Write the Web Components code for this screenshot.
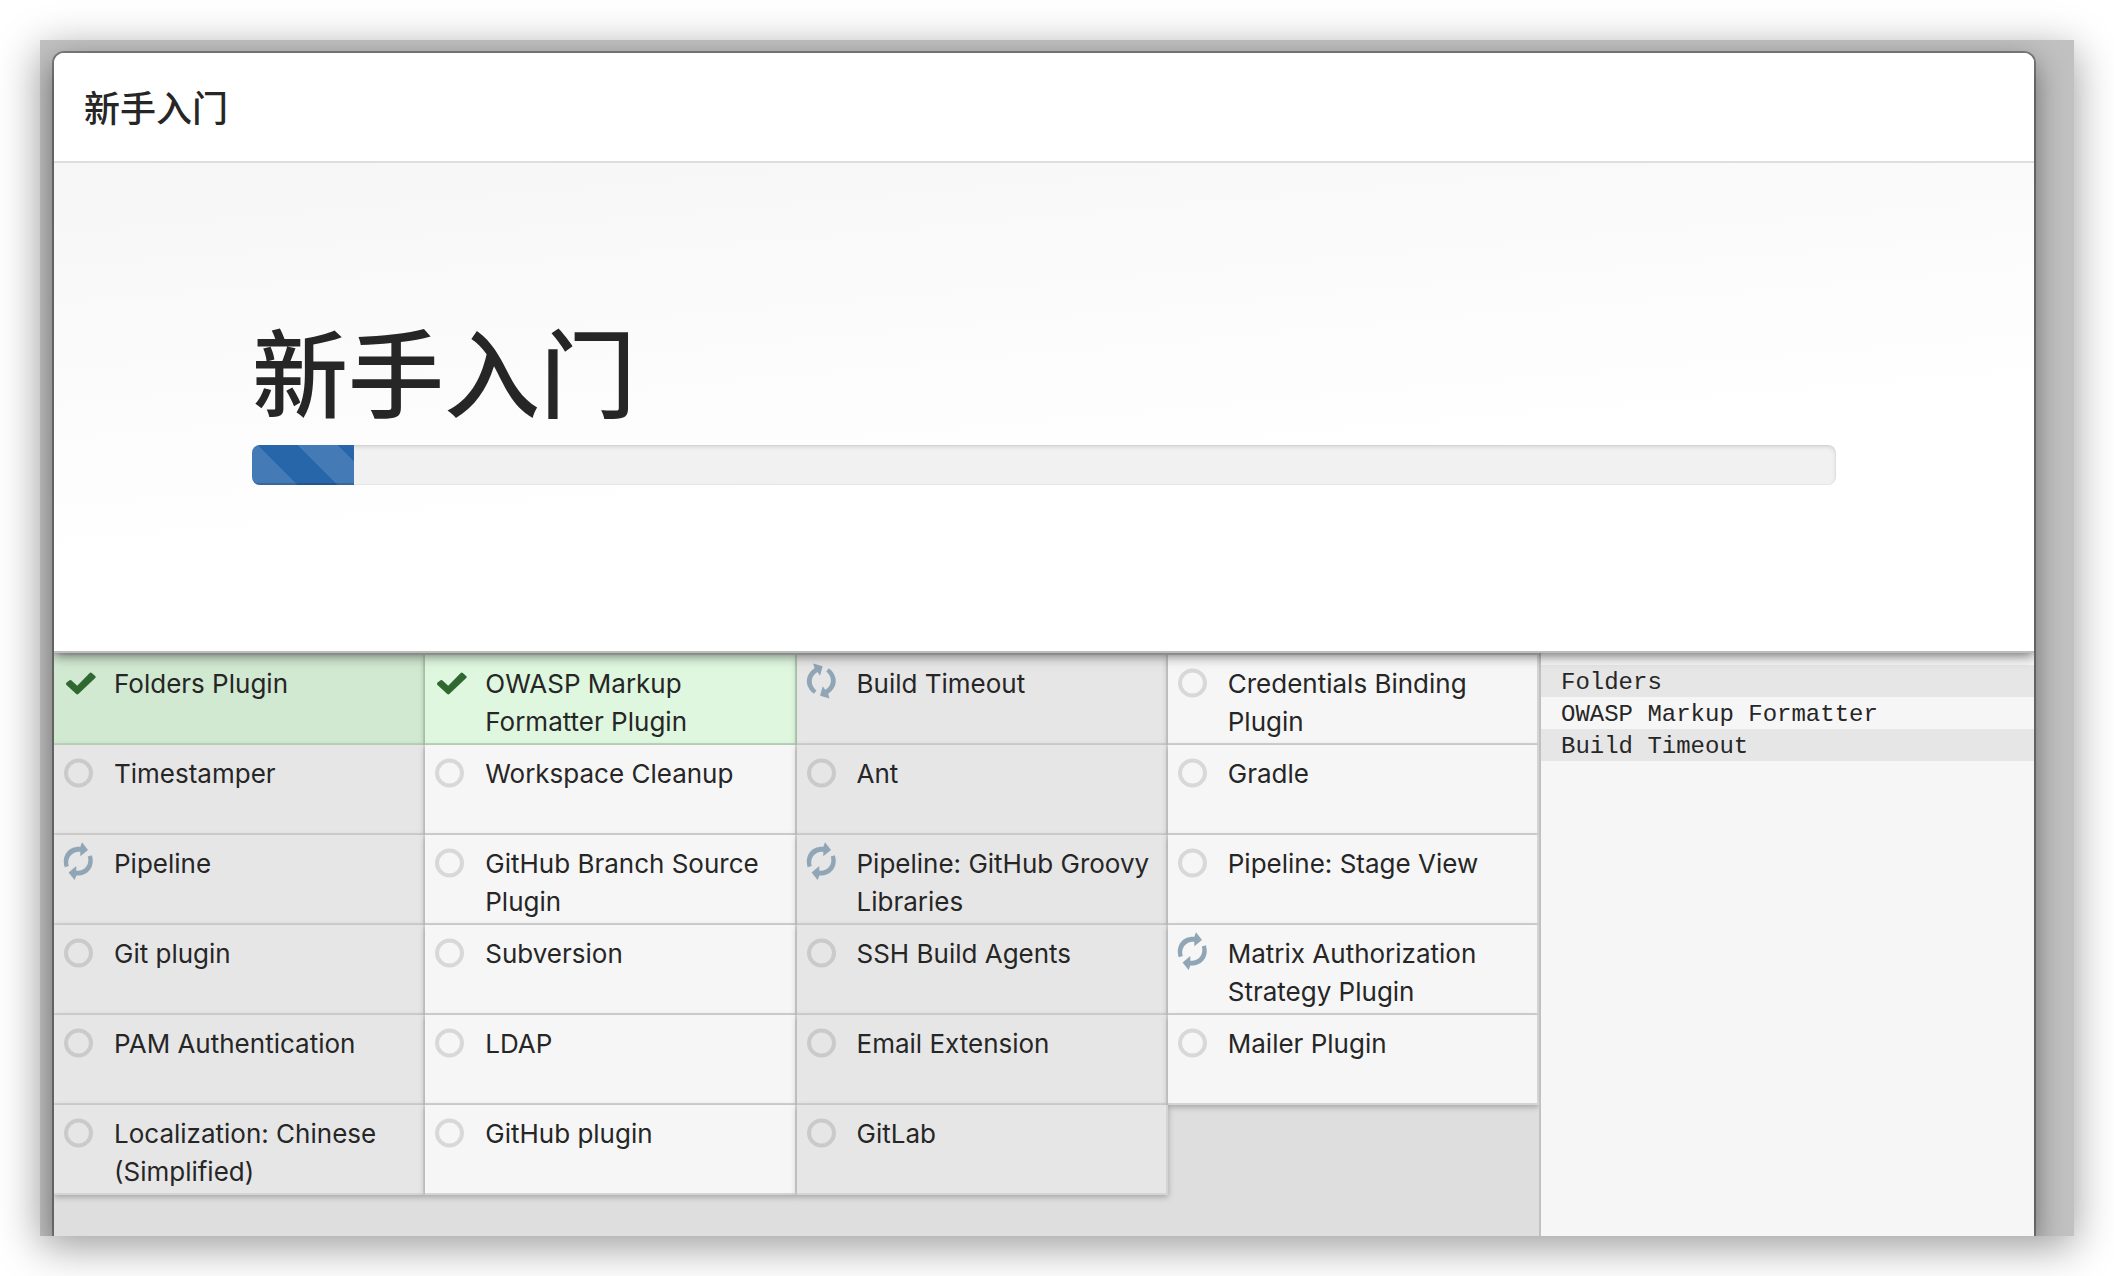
<!DOCTYPE html>
<html lang="zh-CN">
<head>
<meta charset="utf-8">
<title>新手入门</title>
<style>
html, body { height: 100%; margin: 0; }
body { background: #fff; color: #262626; font-family: Inter, "Noto Sans CJK SC", sans-serif; }
</style>
</head>
<body>
<setup-wizard heading="新手入门">
  <install-hero slot="hero" heading="新手入门" value="6.45"></install-hero>
  <plugin-grid slot="plugins"></plugin-grid>
  <install-log slot="log"></install-log>
</setup-wizard>
<script>
const attach = (host, html) => {
  const root = host.attachShadow({ mode: 'open' });
  root.innerHTML = html;
  return root;
};

customElements.define('setup-wizard', class extends HTMLElement {
  connectedCallback() {
    attach(this, `<style>
      :host { display: block; box-sizing: border-box; height: 100%; padding: 40px; overflow: hidden; }
      .backdrop { box-sizing: border-box; height: 100%; padding: 13px 40px 0 14px; background: #c1c1c1; overflow: hidden;
        display: flex; }
      .frame { height: 100%; box-shadow: 0 10px 40px rgba(0,0,0,.4); }
      .modal { flex: 1; display: flex; flex-direction: column; overflow: hidden; border-radius: 10px 10px 0 0; background: #fff; }
      .edge { flex: 1; display: flex; border-radius: 10px 10px 0 0;
        box-shadow: 0 0 0 2px rgba(0,0,0,.33), 0 10px 30px rgba(0,0,0,.5); }
      header { position: relative; z-index: 2; display: flex; align-items: center; box-sizing: border-box; height: 110px;
        padding: 3px 30px 0; background: #fff; border-bottom: 2px solid #dedede; }
      h1 { margin: 0; font-size: 36px; line-height: 50px; font-weight: 500; }
      .hero { position: relative; z-index: 1; flex: none; }
      .body { flex: 1; display: grid; grid-template-columns: 3fr 1fr; min-height: 0; background: #dedede; }
    </style>
    <div class="frame"><div class="backdrop"><div class="edge"><div class="modal">
      <header><h1>${this.getAttribute('heading')}</h1></header>
      <div class="hero"><slot name="hero"></slot></div>
      <div class="body"><slot name="plugins"></slot><slot name="log"></slot></div>
    </div></div></div></div>`);
  }
});

customElements.define('install-hero', class extends HTMLElement {
  connectedCallback() {
    attach(this, `<style>
      :host { display: block; box-sizing: border-box; height: 490px; padding: 148px 10% 0;
        background: linear-gradient(175deg, #f6f6f6, #fff 62%); border-bottom: 2px solid #bdbdbd;
        box-shadow: 0 2px 12px rgba(0,0,0,.6); }
      h2 { margin: 0 0 6px; font-size: 96px; line-height: 128px; font-weight: 500; }
      progress { display: block; width: 100%; height: 40px; appearance: none; border: 0; border-radius: 8px; overflow: hidden;
        background: #f1f1f1; }
      progress::-webkit-progress-bar { background: #f1f1f1; border-radius: 8px;
        box-shadow: inset 0 2px 4px rgba(0,0,0,.12), inset 0 0 0 1px rgba(0,0,0,.03); }
      progress::-webkit-progress-value { background: #2866aa linear-gradient(45deg, rgba(255,255,255,.13) 25%, transparent 25%,
        transparent 50%, rgba(255,255,255,.13) 50%, rgba(255,255,255,.13) 75%, transparent 75%) -34px 0 / 80px 80px;
        box-shadow: inset 0 -2px 0 rgba(0,0,0,.15); }
    </style>
    <h2>${this.getAttribute('heading')}</h2>
    <progress max="100" value="${this.getAttribute('value')}" aria-label="${this.getAttribute('heading')}"></progress>`);
  }
});

const ARROW = 'M2.7 24.2C-.8 12 7 3.3 18.2 3.9L20-.7 26 7 18.300 13.300 18.300 8.700C9.500 8 4.500 15.500 6.800 23z';
const ICONS = {
  done: `<svg viewBox="0 0 36 40"><path fill="#2f6830" stroke="#2f6830" stroke-width="3" stroke-linejoin="round" d="M8.500 18.500 15.300 24.800 28.800 11 32.200 14 15.300 30 5.500 20.800z"/></svg>`,
  pending: `<svg viewBox="0 0 36 40"><circle cx="16.500" cy="20" r="12.500" fill="none" stroke="#000" stroke-opacity=".12" stroke-width="4"/></svg>`,
  busy: `<svg viewBox="0 0 36 40"><g class="spin" fill="#90a6b6"><path d="${ARROW}"/><path transform="rotate(180 16.300 18.200)" d="${ARROW}"/></g></svg>`
};

customElements.define('plugin-cell', class extends HTMLElement {
  connectedCallback() {
    const state = this.getAttribute('state');
    attach(this, `<style>
      :host { display: flex; box-sizing: border-box; height: 90px; gap: 16px; padding: 8px 8px 0 8px;
        font-size: 26px; line-height: 38px; background: var(--cell); border: solid #d4d4d4; border-width: 0 2px 2px 0;
        box-shadow: 0 2px 6px rgba(0,0,0,.27); }
      :host([state=done]) { background: var(--cell-done); border-color: #bfd8bf; }
      svg { display: block; flex: none; width: 36px; height: 40px; overflow: visible; }
      :host([turned]) .spin { transform: rotate(-36deg); transform-origin: 16px 18px; }
      span { padding-top: 2px; }
    </style>${ICONS[state]}<span><slot></slot></span>`);
  }
});

customElements.define('plugin-grid', class extends HTMLElement {
  connectedCallback() {
    const rows = [
      ['Folders Plugin', 'done'], ['OWASP Markup Formatter Plugin', 'done'], ['Build Timeout', 'busy', 'turned'], ['Credentials Binding Plugin'],
      ['Timestamper'], ['Workspace Cleanup'], ['Ant'], ['Gradle'],
      ['Pipeline', 'busy'], ['GitHub Branch Source Plugin'], ['Pipeline: GitHub Groovy Libraries', 'busy'], ['Pipeline: Stage View'],
      ['Git plugin'], ['Subversion'], ['SSH Build Agents'], ['Matrix Authorization Strategy Plugin', 'busy'],
      ['PAM Authentication'], ['LDAP'], ['Email Extension'], ['Mailer Plugin'],
      ['Localization: Chinese (Simplified)'], ['GitHub plugin'], ['GitLab']
    ];
    attach(this, `<style>
      :host { display: grid; grid-template-columns: repeat(4, 1fr); align-content: start; padding-top: 2px; overflow: hidden; min-width: 0; }
      plugin-cell { --cell: #f6f6f6; --cell-done: #dff7df; }
      plugin-cell:nth-of-type(odd) { --cell: #e6e6e6; --cell-done: #d1e8d1; }
    </style>${rows.map(([name, state = 'pending', turned = '']) =>
      `<plugin-cell state="${state}" ${turned}>${name}</plugin-cell>`).join('')}`);
  }
});

customElements.define('install-log', class extends HTMLElement {
  connectedCallback() {
    attach(this, `<style>
      :host { display: block; padding-top: 12px; background: #f6f6f6; border-left: 2px solid #c1c1c1; min-width: 0; }
      div { padding: 4px 20px 0; font: 24px/28px "Liberation Mono", monospace; }
      div:nth-of-type(odd) { background: #e6e6e6; }
    </style><div>Folders</div><div>OWASP Markup Formatter</div><div>Build Timeout</div>`);
  }
});
</script>
</body>
</html>
